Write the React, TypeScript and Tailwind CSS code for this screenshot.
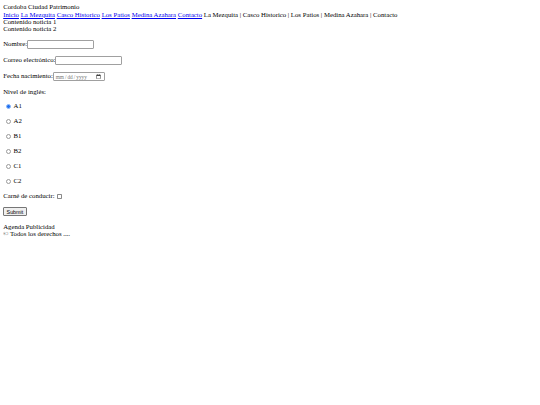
const niveles = ["A1", "A2", "B1", "B2", "C1", "C2"];
const enlaces = ["Inicio", "La Mezquita", "Casco Historico", "Los Patios", "Medina Azahara", "Contacto"];

function Campo({
  label,
  type = "text",
  width = "w-[67px]",
  row = "leading-[9.4px]",
}: {
  label: string;
  type?: string;
  width?: string;
  row?: string;
}) {
  return (
    <p className={`my-[6.4px] ${row}`}>
      <label>{label}</label>
      <input
        type={type}
        className={`${width} h-[8.4px] rounded-[1px] border-[0.8px] border-[#a0a0a0] bg-white px-[0.8px] align-middle text-[5.33px] leading-[6px] text-[#777]`}
      />
    </p>
  );
}

export default function App() {
  return (
    <div className="min-h-[405px] bg-white p-[3.2px] font-['Liberation_Serif',serif] text-[6.75px] leading-[7.36px] text-black">
      <header>
        <div>Cordoba Ciudad Patrimonio</div>
        <nav>
          {enlaces.map((e) => (
            <span key={e}>
              <a href="#" className="text-[#0000ee] underline">
                {e}
              </a>{" "}
            </span>
          ))}
          La Mezquita | Casco Historico | Los Patios | Medina Azahara | Contacto
        </nav>
      </header>
      <main>
        <div>Contenido noticia 1</div>
        <div>Contenido noticia 2</div>
        <form>
          <Campo label="Nombre:" />
          <Campo label="Correo electrónico:" />
          <Campo label="Fecha nacimiento:" type="date" width="w-[52px]" row="leading-[10.4px]" />
          <p className="my-[6.4px]">Nivel de inglés:</p>
          {niveles.map((n) => (
            <p key={n} className="my-[6.4px] leading-[8.7px]">
              <input
                type="radio"
                name="nivel"
                defaultChecked={n === "A1"}
                className="ml-[2.8px] mr-[2.6px] h-[5px] w-[5px] appearance-none rounded-full border-[0.7px] border-[#9a9a9a] bg-white align-middle checked:border-[#8fbaf8] checked:bg-[#1f6ff0]"
              />
              <label>{n}</label>
            </p>
          ))}
          <p className="my-[6.4px] leading-[8.7px]">
            <label>Carné de conducir: </label>
            <input
              type="checkbox"
              className="ml-[1.2px] mr-[1.2px] h-[4.8px] w-[4.8px] appearance-none rounded-[0.8px] border-[0.7px] border-[#8a8a8a] bg-white align-middle"
            />
          </p>
          <p className="my-[6.4px] leading-[8.4px]">
            <button
              type="submit"
              className="rounded-[1px] border-[0.8px] border-[#767676] bg-[#efefef] px-[2.4px] py-[0.4px] align-middle font-['Liberation_Sans',sans-serif] text-[5.33px] leading-[6.4px]"
            >
              Submit
            </button>
          </p>
        </form>
      </main>
      <footer>
        <div>Agenda Publicidad</div>
        <div>© Todos los derechos ....</div>
      </footer>
    </div>
  );
}
